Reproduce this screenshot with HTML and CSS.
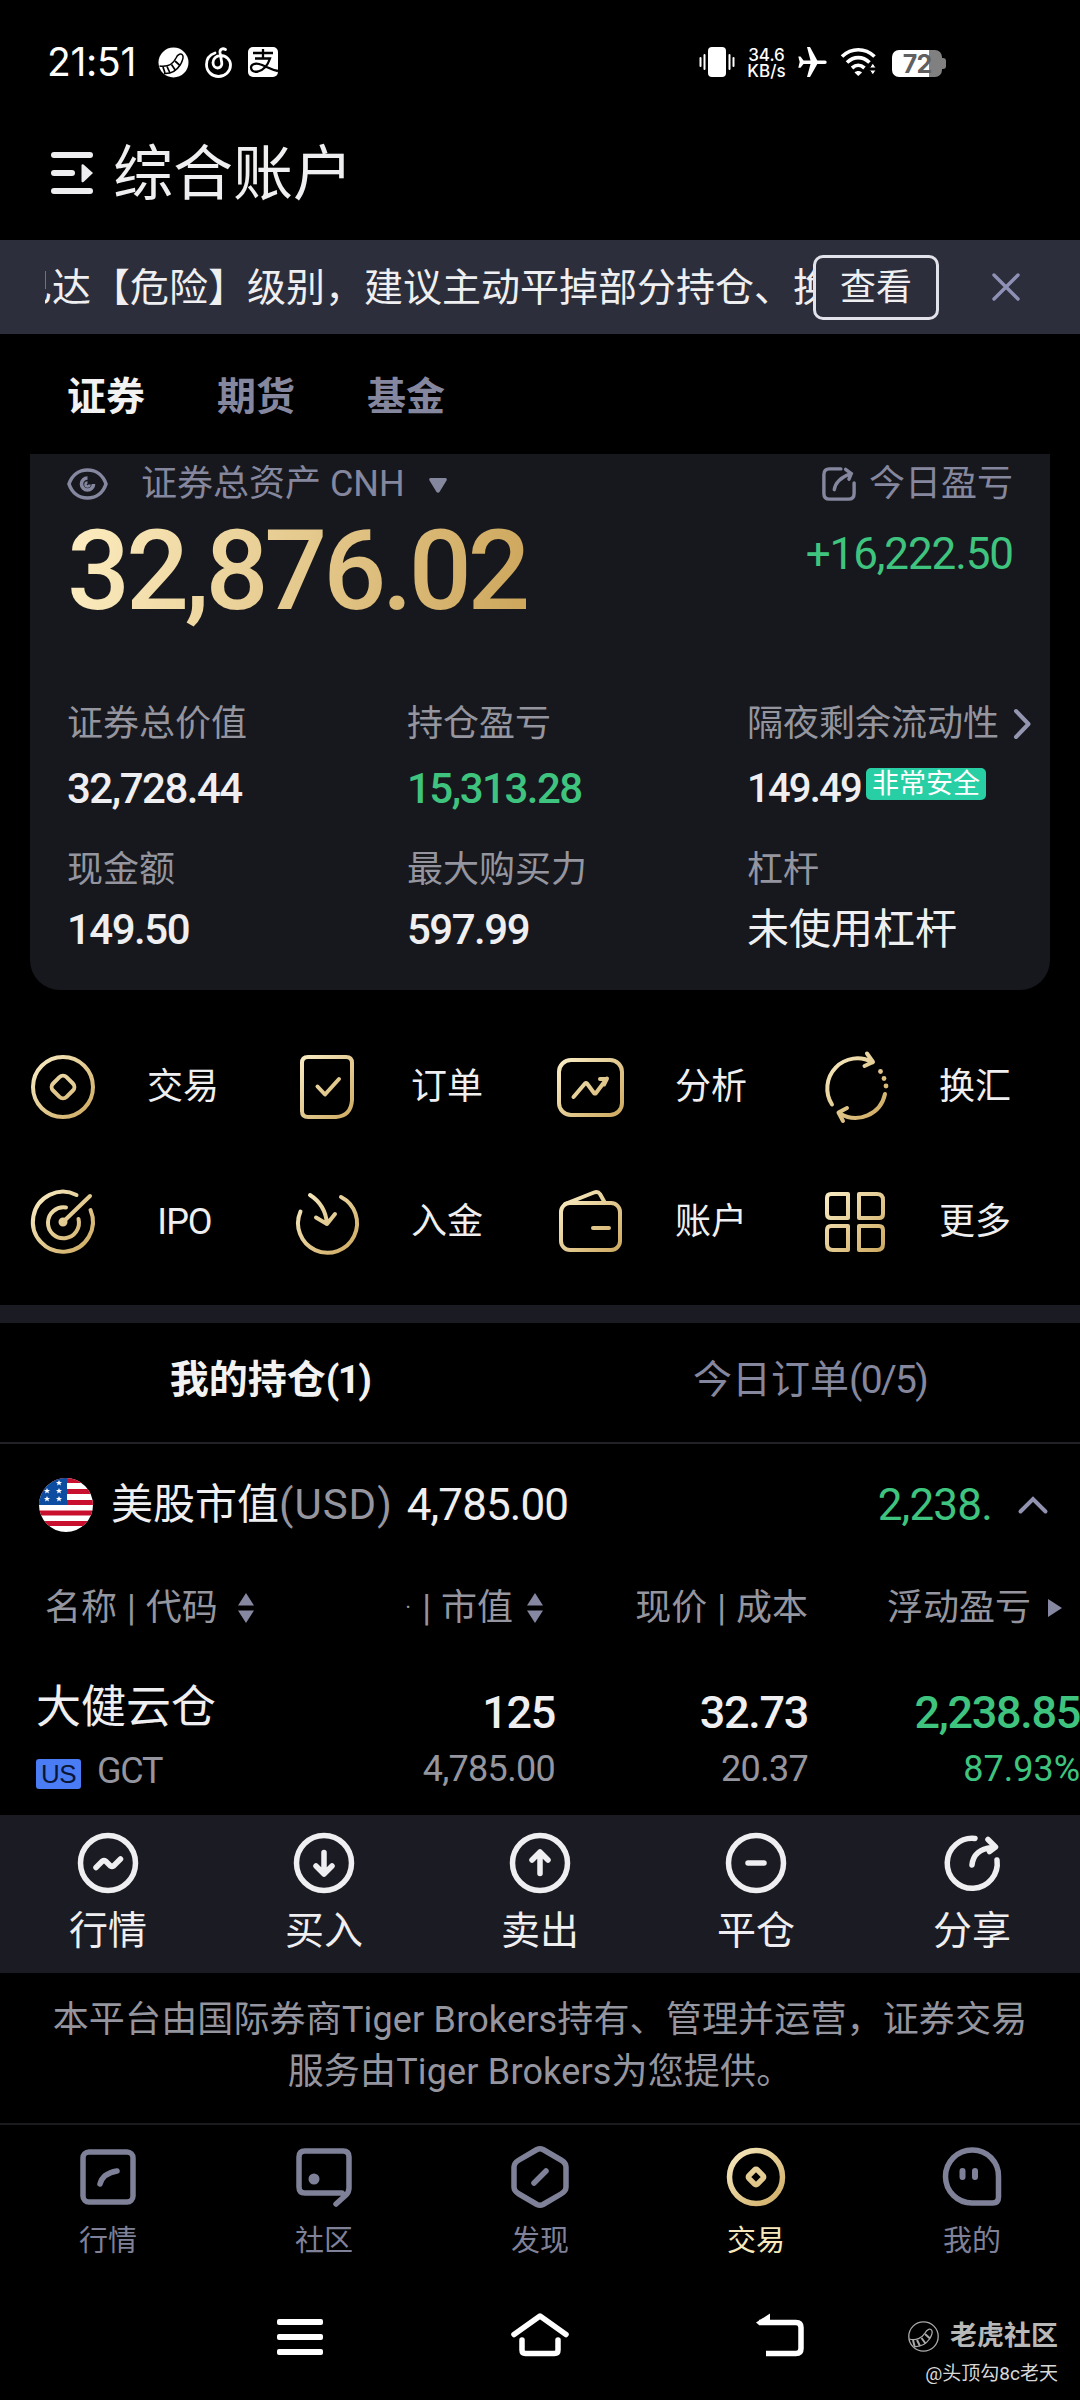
FILE: index.html
```html
<!DOCTYPE html>
<html lang="zh-CN">
<head>
<meta charset="utf-8">
<title>综合账户</title>
<link rel="stylesheet" href="styles.css">
</head>
<body>
<svg class="defs" width="0" height="0" aria-hidden="true">
  <defs>
    <linearGradient id="gold" gradientUnits="userSpaceOnUse" x1="4" y1="4" x2="60" y2="60">
      <stop offset="0" stop-color="#f8ebc2"/><stop offset="1" stop-color="#cfab62"/>
    </linearGradient>
    <clipPath id="round"><circle cx="27" cy="27" r="27"/></clipPath>
  </defs>
</svg>
<div class="screen">

  <div class="status">
    <div class="status-left">
      <span class="clock">21:51</span>
      <svg class="s-tiger" width="31" height="31" viewBox="0 0 31 31"><circle cx="15.500" cy="15.500" r="15" fill="#fff"/><path d="M1.500 19c7 1 13.500-1.500 16.500-8 1.500-4 5.500-5 6.800-2.500.8 2-.4 5.500-2.300 9C19 23 13 27 6 26.500" fill="#fff" stroke="#000" stroke-width="1.500"/><path d="M5 20l2 6M9 19.500l3 6.500M13.500 17.500l4 6M17 14l5 4.500" stroke="#000" stroke-width="1.700"/></svg>
      <svg class="s-music" width="28" height="31" viewBox="0 0 28 31" fill="none" stroke="#fff" stroke-width="2.800" stroke-linecap="round"><path d="M10 6C4 8 1.500 12 1.500 17.500c0 7 5.500 12 12 12s12-5 12-11.500c0-5.500-4.500-9.500-10-9.500-4.500 0-7.500 3.500-7.500 7 0 3 2 5.500 4.500 5.500s4.800-2.300 4.300-5L15 5.500c-.4-3 2.500-4.800 5.500-3"/></svg>
      <svg class="s-pay" width="30" height="30" viewBox="0 0 30 30"><rect width="30" height="30" rx="5" fill="#fff"/><g fill="none" stroke="#000" stroke-width="2.300"><path d="M15 2v9M5 6h20M7 11.500h15c-2 6-6 11.500-12 13-5 1-7-1.500-7-4 0-3 4-4.500 8-3.500 6 1.500 11 5.500 19 7"/></g></svg>
    </div>
    <div class="status-right">
      <svg width="36" height="30" viewBox="0 0 36 30" fill="#fff"><rect x="9" width="18" height="30" rx="4"/><g stroke="#fff" stroke-width="2" stroke-linecap="round"><path d="M5.500 8v14M1.500 11v8M30.500 8v14M34.500 11v8"/></g></svg>
      <span class="rate"><span>34.6</span><span>KB/s</span></span>
      <svg width="29" height="30" viewBox="0 0 29 30" fill="#fff"><path d="M.3 9.500h2.200l3 4h7L9 0h3l7.300 13.500H27a1.700 1.700 0 0 1 0 3.400h-7.700L12 30H9l3.500-13.100h-7l-3 3.900H.3L1.700 15z"/></svg>
      <svg width="38" height="28" viewBox="0 0 38 28" fill="none" stroke="#fff" stroke-width="3.700"><path d="M2 8.500C11.500-.5 25-.5 34.500 8.500M7 14.500c7-6.500 15.500-6.500 22.500 0M12 20c4.500-3.800 8-3.800 12.500 0"/><path d="M14.500 24.500c2-2 5.500-2 7.500 0L18.300 28z" fill="#fff" stroke="none"/><path d="M29.500 20l3.300-5 3.300 5zM29.500 22l3.300 5 3.300-5z" fill="#fff" stroke="#000" stroke-width="1"/></svg>
      <span class="battery"><span class="battery-level">72</span></span>
    </div>
  </div>

  <div class="header">
    <svg width="42" height="44" viewBox="0 0 42 44" fill="#eeeef0"><rect y="1" width="42" height="6" rx="3"/><rect y="19" width="24" height="6" rx="3"/><rect y="37" width="42" height="6" rx="3"/><path d="M30.500 14.500q0-2 2-1L42 22l-9.500 9q-2 1-2-1z"/></svg>
    <h1>综合账户</h1>
  </div>

  <div class="banner">
    <div class="marquee"><span>已达【危险】级别，建议主动平掉部分持仓、换</span></div>
    <span class="view">查看</span>
    <svg width="28" height="28" viewBox="0 0 28 28" stroke="#8e91b5" stroke-width="3.400" stroke-linecap="round"><path d="M2 2l24 24M26 2L2 26"/></svg>
  </div>

  <div class="tabs"><span class="on">证券</span><span>期货</span><span>基金</span></div>

  <div class="card">
    <div class="card-top">
      <svg width="41" height="32" viewBox="0 0 41 32" fill="none" stroke="#85879e" stroke-width="3.600"><path d="M2 16C5 7 12 2 20.500 2S36 7 39 16c-3 9-10 14-18.500 14S5 25 2 16z"/><path d="M20.500 10a6 6 0 1 0 6 6"/><path d="M20.500 14.500a2 2 0 1 0 2 2" stroke-width="2.500"/></svg>
      <span class="asset">证券总资产 CNH</span>
      <svg class="caret" width="18" height="15" viewBox="0 0 18 15" fill="#85879e"><path d="M1.500 0h15q2 .5 1 2.500l-7 11.500q-1.500 1.500-3 0l-7-11.500q-1-2 1-2.500z"/></svg>
      <svg class="edit" width="34" height="34" viewBox="0 0 36 36" fill="none" stroke="#85879e" stroke-width="3.600" stroke-linecap="round"><path d="M20 2H8Q2 2 2 8v20q0 6 6 6h20q6 0 6-6V17"/><path d="M13 24C14 17 20 11 30 7M25 2.500l6 4.500-2.500 6"/></svg>
      <span>今日盈亏</span>
    </div>
    <div class="card-total">
      <span class="total">32,876.02</span>
      <span class="today">+16,222.50</span>
    </div>
    <div class="stats">
      <div><p>证券总价值</p><b class="n">32,728.44</b></div>
      <div><p>持仓盈亏</p><b class="n up">15,313.28</b></div>
      <div><p>隔夜剩余流动性<svg class="more" width="18" height="30" viewBox="0 0 18 30" fill="none" stroke="#9496b0" stroke-width="4" stroke-linecap="round" stroke-linejoin="round"><path d="M3 2l12.500 13L3 28"/></svg></p><span class="safe"><b class="n small">149.49</b><i>非常安全</i></span></div>
      <div><p>现金额</p><b class="n">149.50</b></div>
      <div><p>最大购买力</p><b class="n">597.99</b></div>
      <div><p>杠杆</p><b class="cn">未使用杠杆</b></div>
    </div>
  </div>

  <div class="quick">
    <div><svg viewBox="0 0 64 64"><circle cx="32" cy="32" r="30"/><rect x="22.500" y="22.500" width="19" height="19" rx="5" transform="rotate(45 32 32)"/></svg><span>交易</span></div>
    <div><svg viewBox="0 0 64 64"><path d="M13 2h38q6 0 6 6v37Q56 61 41 62H13q-6 0-6-6V8q0-6 6-6z"/><path d="M22.500 31.500l7.500 8 14-15.500"/></svg><span>订单</span></div>
    <div><svg class="wide" viewBox="-2 0 68 64"><rect x="0" y="5" width="63" height="55" rx="12"/><path d="M14.500 42L26 28.500q1-1 2 0l7 9.500q1 1 2 0L47.500 24H41M48 23.500l-3 6"/></svg><span>分析</span></div>
    <div><svg viewBox="0 0 64 64"><path d="M9 49.500A30 30 0 0 1 49.500 7.500M44 -1.500L50 7l-8.500 4M62 39A30 30 0 0 1 17 58.500M24 53l-8.500 4.500L20 66"/><g fill="url(#gold)" stroke="none"><circle cx="57.500" cy="16.500" r="2.400"/><circle cx="61" cy="23.500" r="2.400"/><circle cx="63" cy="31" r="2.400"/></g></svg><span>换汇</span></div>
    <div><svg viewBox="0 0 64 64"><path d="M45.500 5A30 30 0 1 0 59.500 20M35 17.500A15.500 15.500 0 1 0 47.500 29M32 32L59 6"/><circle cx="32" cy="32" r="3.500" fill="url(#gold)" stroke-width="2"/></svg><span class="latin">IPO</span></div>
    <div><svg viewBox="0 0 64 64"><path d="M5.500 21.500A29.500 29.500 0 1 0 46 7M15 5c11 7 16 16 17 29M21 27.500l11 6.500 8-10"/></svg><span>入金</span></div>
    <div><svg viewBox="0 0 64 64"><rect x="2" y="13" width="59" height="47" rx="9"/><path d="M6 14L35 2.500q4-1.500 6 1.500l5 9M34 38h16"/></svg><span>账户</span></div>
    <div><svg viewBox="0 0 64 64"><path d="M8 4h17v24H8q-4 0-4-4V8q0-4 4-4zM36 4h18q6 0 6 6v14q0 4-4 4H36zM8 36h17v24H10q-6 0-6-6V40q0-4 4-4zM36 36h20q4 0 4 4v14q0 6-6 6H36z" /></svg><span>更多</span></div>
  </div>

  <div class="band"></div>

  <div class="book-tabs"><span class="on">我的持仓<em>(1)</em></span><span>今日订单<em>(0/5)</em></span></div>

  <div class="market">
    <svg width="54" height="54" viewBox="0 0 54 54"><g clip-path="url(#round)"><path fill="#fff" d="M0 0h54v54H0z"/><path stroke="#c8102e" stroke-width="5" d="M0 2.500h54M0 13.500h54M0 24.500h54M0 35h54M0 45.500h54"/><path fill="#0d4da1" d="M0 0h28v27H0z"/><g fill="#fff"><path id="star" d="M20 2l.9 2h2.100l-1.700 1.400.7 2.200-2-1.300-2 1.300.7-2.200L17 4h2.100z"/><use href="#star" y="8"/><use href="#star" y="16"/><use href="#star" x="-12" y="8"/><use href="#star" x="-12" y="16"/></g></g></svg>
    <span class="m-name">美股市值<em>(USD)</em></span>
    <span class="m-value">4,785.00</span>
    <span class="m-gain">2,238.</span>
    <svg width="30" height="18" viewBox="0 0 30 18" fill="none" stroke="#9092b0" stroke-width="4" stroke-linecap="round"><path d="M2.500 15.500L15 3l12.500 12.500"/></svg>
  </div>

  <div class="row head">
    <span class="c1">名称 | 代码<svg class="sort" viewBox="0 0 16 30"><path d="M8 0l8 12.500H0zM8 30l8-12.500H0z"/></svg></span>
    <span class="c2"><s>·</s>| 市值<svg class="sort" viewBox="0 0 16 30"><path d="M8 0l8 12.500H0zM8 30l8-12.500H0z"/></svg></span>
    <span class="c3">现价 | 成本</span>
    <span class="c4">浮动盈亏<svg width="15" height="18" viewBox="0 0 15 18" fill="#8688a2"><path d="M1 0l14 9L1 18z"/></svg></span>
  </div>

  <div class="row hold">
    <div class="c1"><span class="h-name">大健云仓</span><span class="h-code"><i>US</i>GCT</span></div>
    <div class="c2"><b>125</b><span>4,785.00</span></div>
    <div class="c3"><b>32.73</b><span>20.37</span></div>
    <div class="c4 up"><b>2,238.85</b><span>87.93%</span></div>
  </div>

  <div class="actions">
    <div><svg viewBox="0 0 60 60"><circle cx="30" cy="30" r="27.500"/><path d="M18 34.500l6.500-6.500q1.500-1 3 0l5 5q1.500 1 3 0l7-7"/></svg><span>行情</span></div>
    <div><svg viewBox="0 0 60 60"><circle cx="30" cy="30" r="27.500"/><path d="M30 19.500V41M22 33l8 8 8-8"/></svg><span>买入</span></div>
    <div><svg viewBox="0 0 60 60"><circle cx="30" cy="30" r="27.500"/><path d="M30 40.500V19M22 27l8-8 8 8"/></svg><span>卖出</span></div>
    <div><svg viewBox="0 0 60 60"><circle cx="30" cy="30" r="27.500"/><path d="M22 30h16"/></svg><span>平仓</span></div>
    <div><svg viewBox="0 0 60 60"><path d="M33 5.500A25 25 0 1 0 55 27M30 32C31 22 38 15.500 50 14.500M46 6.500l7.500 7.500-6 4.500"/></svg><span>分享</span></div>
  </div>

  <p class="legal">本平台由国际券商Tiger Brokers持有、管理并运营，证券交易<br>服务由Tiger Brokers为您提供。</p>

  <div class="nav">
    <div><svg viewBox="0 0 64 64"><rect x="7" y="7" width="50" height="50" rx="6"/><path d="M24 39c2-8 8-11.500 17-13"/></svg><span>行情</span></div>
    <div><svg viewBox="0 0 64 64"><path d="M50 48H13q-6 0-6-6V12q0-6 6-6h38q6 0 6 6v31q0 4-3 7l-10 9"/><circle cx="22" cy="34" r="5.500" class="dot"/></svg><span>社区</span></div>
    <div><svg viewBox="0 0 64 64"><path d="M29 4.500q3-1.500 6 0l18 10.500q5 3 5 7v20q0 4-5 7L35 59.500q-3 1.500-6 0L11 49q-5-3-5-7V22q0-4 5-7z"/><path d="M26 38l12-12"/></svg><span>发现</span></div>
    <div class="on"><svg viewBox="0 0 64 64"><circle cx="32" cy="32" r="26.500"/><rect x="26" y="26" width="12" height="12" rx="2" transform="rotate(45 32 32)"/></svg><span>交易</span></div>
    <div><svg viewBox="0 0 64 64"><path d="M32 5a26 26 0 0 1 26.500 27v20q0 6-6 6H32A26.500 26.500 0 0 1 32 5z"/><path d="M22.500 26v6M35 26v6" class="eyes"/></svg><span>我的</span></div>
  </div>

  <div class="system">
    <svg width="46" height="44" viewBox="0 0 46 44" fill="#fff"><rect y="6" width="46" height="6" rx="2"/><rect y="21" width="46" height="6" rx="2"/><rect y="36" width="46" height="6" rx="2"/></svg>
    <svg width="58" height="44" viewBox="0 0 58 44" fill="none" stroke="#fff" stroke-width="5.500" stroke-linecap="round" stroke-linejoin="round"><path d="M3 21.500L29 3l26 18.500"/><path d="M11 27v10q0 3.500 3.500 3.500h29q3.500 0 3.500-3.500V27"/></svg>
    <svg width="48" height="44" viewBox="0 0 48 44" fill="none" stroke="#fff" stroke-width="5.500"><path d="M3 9.500h37q5 0 5 5v21q0 5-5 5H10"/><path d="M0 9.500L14 .500V12H3z" fill="#fff" stroke="none"/></svg>
  </div>

  <div class="mark">
    <div class="mark-brand"><svg width="31" height="31" viewBox="0 0 31 31" fill="none" stroke="#aaa" stroke-width="1.300"><circle cx="15.500" cy="15.500" r="14.700"/><path d="M1 18c7 2 13-1 16-6 2-4 5.500-5 6.800-2.500 1 2-.4 5.500-2.300 8.500C18 23 12 26 6 25.500"/><path d="M5 19l1.500 6M9 19l3 6M13.500 17l4 5.500M17 13l5 4.500" stroke-width="2"/></svg><b>老虎社区</b></div>
    <span>@头顶勾8c老天</span>
  </div>
</div>
</body>
</html>
```
FILE: styles.css
```css
* { box-sizing: border-box; margin: 0; padding: 0; }
body { background: #000; font-family: Roboto, "Noto Sans CJK SC", sans-serif; color: #efeff1; }
.defs { position: absolute; }
svg { flex: none; overflow: visible; }
.screen { position: relative; width: 1080px; height: 2400px; overflow: hidden; display: flex; flex-direction: column; background: #000; }
.screen > * { flex: none; }
i, em { font-style: normal; }

.status { height: 124px; padding: 0 138px 0 47px; display: flex; justify-content: space-between; align-items: center; color: #fff; }
.status-left, .status-right { display: flex; align-items: center; }
.clock { font: 400 39px/44px Inter, sans-serif; letter-spacing: -.3px; width: 111px; white-space: nowrap; }
.s-music { margin: 0 15px 0 16px; }
.rate { display: flex; flex-direction: column; align-items: center; margin: 2px 12px 0 12px; font: 500 17px/16px Inter, sans-serif; width: 39px; }
.status-right svg:nth-of-type(3) { margin-left: 13px; }
.battery { position: relative; width: 50px; height: 27px; margin: 2px 0 0 14px; border-radius: 7px; background: linear-gradient(90deg, #fff 37px, #808080 37px); }
.battery::after { content: ""; position: absolute; right: -4px; top: 8px; width: 4px; height: 11px; border-radius: 0 3px 3px 0; background: #808080; }
.battery-level { display: block; text-align: center; color: #606060; font: 700 25px/28px Inter, sans-serif; letter-spacing: -1px; }

.header { height: 96px; margin-bottom: 20px; padding: 2px 0 0 51px; display: flex; align-items: center; gap: 20px; }
h1 { font-size: 60px; line-height: 90px; font-weight: 400; padding-top: 3px; }

.banner { height: 94px; padding-left: 45px; display: flex; align-items: center; background: #2d2e3b; font-size: 39px; line-height: 60px; }
.marquee { width: 768px; padding-top: 1px; overflow: hidden; display: flex; white-space: nowrap; }
.marquee span { margin-left: -32px; }
.view { width: 126px; height: 65px; margin-right: 53px; border: 3px solid #e1e2ea; border-radius: 10px; text-align: center; font-size: 36px; line-height: 60px; }

.tabs { height: 120px; padding: 0 0 2px 67px; display: flex; align-items: center; gap: 72px; font-size: 39px; font-weight: 700; color: #85879e; }
.tabs .on { color: #f2f2f3; }

.card { height: 536px; margin: 0 30px; padding: 0 37px; border-radius: 0 0 30px 30px; background: #17181d; }
.card-top { height: 59px; display: flex; align-items: center; font-size: 36px; line-height: 50px; color: #85879e; }
.asset { margin-left: 33px; white-space: pre; }
.caret { margin: 4px 0 0 24px; }
.edit { margin: 0 13px 0 auto; }
.card-total { height: 174px; padding-top: 3px; display: flex; justify-content: space-between; align-items: flex-start; }
.total { font-size: 111px; line-height: 111px; font-weight: 500; letter-spacing: -4.2px; background: linear-gradient(100deg, #fdedc1, #cda65b); -webkit-background-clip: text; background-clip: text; color: transparent; }
.today { font-size: 44px; line-height: 52px; margin-top: 12px; letter-spacing: -1.1px; color: #3fc47f; }
.stats { display: grid; grid-template-columns: 340px 340px 300px; grid-template-rows: 146px 129px; }
.stats p { display: flex; align-items: center; font-size: 36px; line-height: 50px; padding-top: 12px; color: #94959f; white-space: nowrap; }
.stats .more { margin-left: 14px; }
.stats .n { display: block; margin-top: 16px; font-size: 42px; line-height: 48px; font-weight: 500; letter-spacing: -1.5px; }
.stats > div:nth-child(n+4) .n, .stats .cn { margin-top: 11px; }
.stats .cn { display: block; font-size: 42px; line-height: 48px; font-weight: 400; }
.stats .n.small { font-size: 40px; letter-spacing: -1.8px; }
.up, .stats .up { color: #3fc47f; }
.safe { display: flex; }
.safe i { height: 32px; margin: 19px 0 0 5px; padding: 0 6px; border-radius: 5px; background: #28cfa5; color: #fff; font-size: 27px; line-height: 33px; }

.quick { height: 315px; padding: 29px 0 0 16px; display: grid; grid-template-columns: repeat(4, 264px); grid-template-rows: 135px 135px; }
.quick div { display: grid; grid-template-columns: 94px 146px; align-items: center; justify-items: center; }
.quick svg { width: 64px; height: 64px; fill: none; stroke: url(#gold); stroke-width: 4; stroke-linecap: round; stroke-linejoin: round; }
.quick svg.wide { width: 68px; }
.quick span { font-size: 36px; line-height: 50px; padding-top: 1px; }
.quick .latin { padding-left: 3px; letter-spacing: -1px; }

.band { height: 18px; background: #1b1b24; }
.book-tabs { height: 121px; padding-bottom: 14px; display: grid; grid-template-columns: 1fr 1fr; align-items: center; justify-items: center; font-size: 39px; color: #85879e; border-bottom: 2px solid #222226; }
.book-tabs .on { color: #f2f2f3; font-weight: 700; }
.book-tabs em { letter-spacing: -1.8px; }

.market { height: 121px; padding: 1px 32px 0 39px; display: flex; align-items: center; font-size: 42px; line-height: 56px; }
.m-name { margin-left: 18px; }
.m-name em { color: #94959f; letter-spacing: 1px; }
.m-value { margin-left: 14px; font-size: 44px; letter-spacing: -.9px; }
.m-gain { margin: 0 26px 0 auto; font-size: 44px; letter-spacing: -.8px; color: #3fc47f; }

.row { display: grid; grid-template-columns: 46px 300px 209px 253px 272px; }
.row > * { white-space: nowrap; }
.row .c1 { grid-column: 2; }
.row .c2, .row .c3, .row .c4 { justify-self: end; }
.head { height: 84px; padding-top: 1px; font-size: 36px; line-height: 84px; color: #94959f; word-spacing: 1px; }
.head > * { display: flex; align-items: center; }
.head .c1 { margin-left: -1px; }
.head .c2 { margin-right: 12px; }
.head .c2 s { width: 17px; text-decoration: none; font-size: 22px; }
.head .c4 { margin-right: 18px; }
.head .c4 svg { margin-left: 16px; }
.sort { width: 16px; height: 30px; margin-left: 20px; fill: #8688a2; }
.head .c2 .sort { margin-left: 14px; }
.hold { height: 166px; padding-top: 21px; }
.hold > div { display: flex; flex-direction: column; align-items: flex-end; }
.hold .c1 { align-items: flex-start; margin-left: -10px; }
.h-name { font-size: 45px; line-height: 76px; }
.h-code { display: flex; align-items: center; font-size: 36px; line-height: 50px; color: #94959f; letter-spacing: -1.2px; }
.h-code i { width: 45px; height: 30px; margin: 5px 16px 0 0; border-radius: 3px; background: #4a7cf6; color: #0a1636; font: 400 26px/31px "Liberation Sans", sans-serif; letter-spacing: -.5px; text-align: center; }
.hold b { font-size: 45px; line-height: 86px; margin-bottom: -10px; font-weight: 500; letter-spacing: -1.3px; }
.hold .c2 span, .hold .c3 span, .hold .c4 span { font-size: 36px; line-height: 46px; letter-spacing: -.7px; color: #94959f; }
.hold .c4 span { color: #3fc47f; letter-spacing: 0; }

.actions { height: 158px; padding-top: 18px; display: grid; grid-template-columns: repeat(5, 1fr); background: #1b1b24; }
.actions div, .nav div { display: flex; flex-direction: column; align-items: center; }
.actions svg { width: 60px; height: 60px; fill: none; stroke: #efeff1; stroke-width: 5.5; stroke-linecap: round; stroke-linejoin: round; }
.actions span { font-size: 39px; line-height: 74px; padding-top: 1px; }

.legal { height: 152px; padding-top: 21px; text-align: center; font-size: 36px; line-height: 52px; letter-spacing: .16px; color: #94959f; white-space: nowrap; border-bottom: 2px solid #1b1b1f; }

.nav { height: 156px; padding-top: 20px; display: grid; grid-template-columns: repeat(5, 1fr); color: #7f8198; }
.nav svg { width: 64px; height: 64px; fill: none; stroke: #7f8198; stroke-width: 5.5; stroke-linecap: round; stroke-linejoin: round; }
.nav .dot { fill: #7f8198; stroke: none; }
.nav .eyes { stroke-width: 6; }
.nav span { font-size: 29px; line-height: 64px; }
.nav .on { color: #f8e9bd; }
.nav .on svg { stroke: url(#gold); }

.system { height: 107px; padding: 0 276px 0 277px; display: flex; align-items: center; justify-content: space-between; }
.mark { position: absolute; right: 22px; top: 2317px; display: flex; flex-direction: column; align-items: flex-end; }
.mark-brand { display: flex; align-items: center; gap: 11px; font-size: 27px; line-height: 38px; color: #b8b8b8; }
.mark > span { font-size: 19px; line-height: 38px; color: #d8d8d8; }
```
